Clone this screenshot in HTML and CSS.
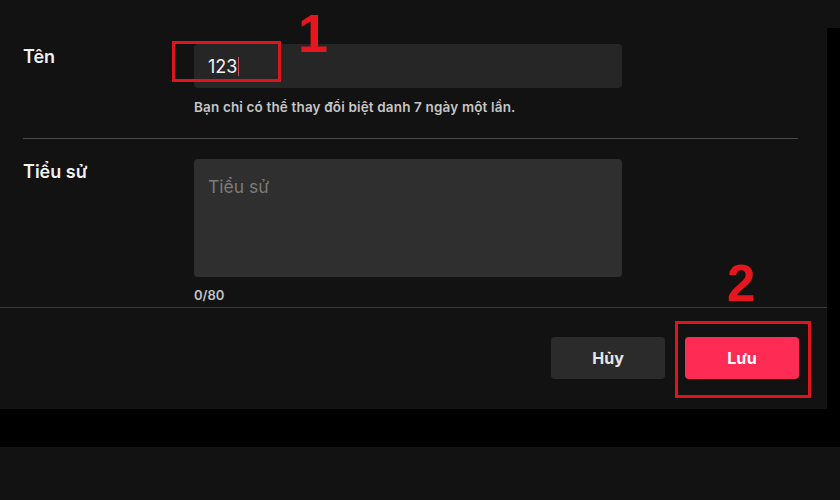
FILE: index.html
```html
<!DOCTYPE html>
<html lang="vi">
<head>
<meta charset="utf-8">
<title>Sửa hồ sơ</title>
<link rel="stylesheet" href="styles.css">
</head>
<body>
<div class="frame">
  <div class="panel">
    <div class="form">
      <div class="field">
        <div class="label">Tên</div>
        <div class="control">
          <div class="input"><span class="value">123</span><span class="caret"></span></div>
          <div class="hint">Bạn chỉ có thể thay đổi biệt danh 7 ngày một lần.</div>
        </div>
      </div>
      <div class="divider"></div>
      <div class="field">
        <div class="label">Tiểu sử</div>
        <div class="control">
          <div class="textarea"><span class="placeholder">Tiểu sử</span></div>
          <div class="count">0/80</div>
        </div>
      </div>
    </div>
    <div class="footer">
      <button class="btn btn-cancel">Hủy</button>
      <button class="btn btn-save">Lưu</button>
    </div>
    <div class="mark mark-box1"></div>
    <div class="mark mark-num1">1</div>
    <div class="mark mark-box2"></div>
    <div class="mark mark-num2">2</div>
  </div>
  <div class="gutter"></div>
</div>
<div class="band"></div>
</body>
</html>
```

FILE: styles.css
```css
html, body {
  margin: 0;
  padding: 0;
  background: #121212;
  font-family: Inter, "Noto Sans", "Liberation Sans", sans-serif;
}

.frame {
  display: flex;
  align-items: stretch;
}

.panel {
  position: relative;
  width: 827px;
  height: 409px;
  background: #121212;
  border-radius: 0 0 10px 4px;
  display: flex;
  flex-direction: column;
}

.gutter {
  flex: 1;
  margin-top: 28px;
  background: #000;
}

.band {
  height: 38px;
  background: #000;
}

.form {
  padding: 44px 0 0 23px;
}

.field {
  display: flex;
}

.label {
  width: 171px;
  padding-top: 1px;
  font-size: 18px;
  line-height: 24px;
  font-weight: 600;
  color: #f1f1f1;
}

.control {
  width: 428px;
}

.input {
  height: 44px;
  background: #262626;
  border-radius: 4px;
  display: flex;
  align-items: center;
  padding-left: 14px;
  font-size: 18px;
  color: #f2f2f2;
}

.caret {
  display: inline-block;
  width: 1px;
  height: 19px;
  margin-left: 1px;
  background: #d8435a;
}

.hint {
  margin-top: 10px;
  font-size: 13.5px;
  line-height: 18px;
  font-weight: 600;
  letter-spacing: 0.15px;
  color: #c6c6c6;
}

.divider {
  width: 775px;
  height: 1px;
  margin: 22px 0 20px;
  background: #4a4a4a;
}

.textarea {
  height: 118px;
  background: #2f2f2f;
  border-radius: 4px;
  padding: 17px 14px 0;
  box-sizing: border-box;
  font-size: 17.5px;
  line-height: 22px;
}

.placeholder {
  color: #7b7b7b;
}

.count {
  margin-top: 9px;
  font-size: 13px;
  line-height: 18px;
  font-weight: 600;
  color: #c2c2c2;
}

.footer {
  margin-top: 3px;
  border-top: 1px solid #3a3a3a;
  padding: 29px 28px 0 0;
  display: flex;
  justify-content: flex-end;
  gap: 20px;
}

.btn {
  height: 42px;
  border: none;
  border-radius: 4px;
  font-family: inherit;
  font-size: 16px;
  font-weight: 700;
  cursor: pointer;
}

.btn-cancel {
  width: 114px;
  background: #2b2b2b;
  color: #e6e6e6;
}

.btn-save {
  width: 114px;
  background: #fe2c55;
  color: #ffffff;
}

.mark {
  position: absolute;
  color: #e5161d;
  font-family: "Liberation Sans", Arial, sans-serif;
  font-weight: 700;
}

.mark-box1 {
  left: 172px;
  top: 41px;
  width: 103px;
  height: 35px;
  border: 3px solid #e0151c;
}

.mark-box2 {
  left: 675px;
  top: 321px;
  width: 130px;
  height: 71px;
  border: 3px solid #e0151c;
}

.mark-num1 {
  left: 298px;
  top: 4px;
  font-size: 54px;
  line-height: 58px;
}

.mark-num2 {
  left: 727px;
  top: 256px;
  font-size: 51px;
  line-height: 56px;
}
```
